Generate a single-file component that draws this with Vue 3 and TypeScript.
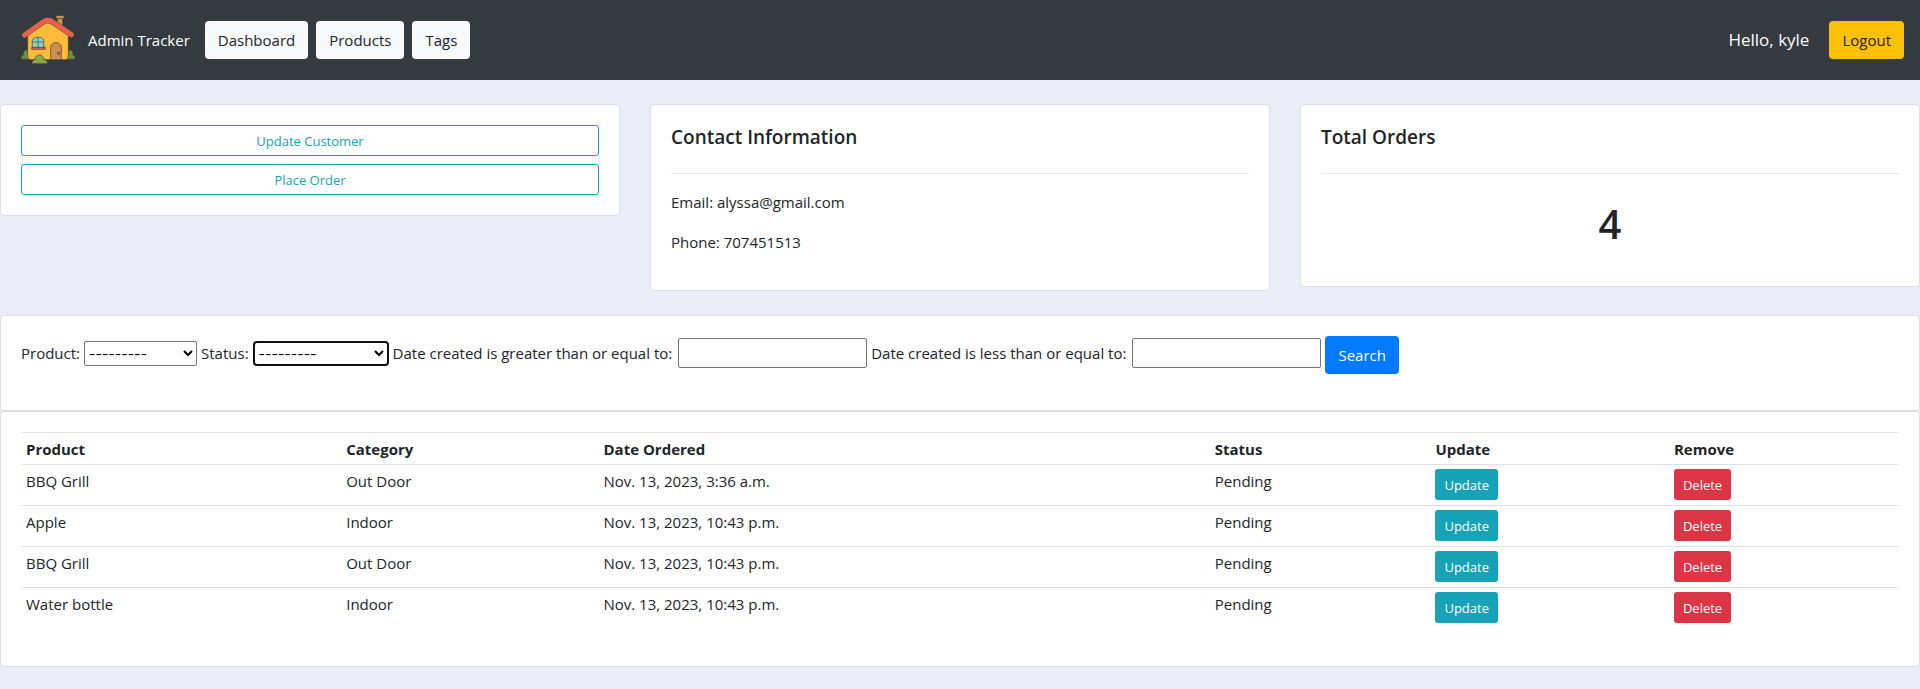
<script setup lang="ts">
import { ref } from 'vue'

interface Order {
  id: number
  product: string
  category: string
  date: string
  status: string
}

const links: string[] = ['Dashboard', 'Products', 'Tags']
const columns: string[] = ['Product', 'Category', 'Date Ordered', 'Status', 'Update', 'Remove']

const orders = ref<Order[]>([
  { id: 1, product: 'BBQ Grill', category: 'Out Door', date: 'Nov. 13, 2023, 3:36 a.m.', status: 'Pending' },
  { id: 2, product: 'Apple', category: 'Indoor', date: 'Nov. 13, 2023, 10:43 p.m.', status: 'Pending' },
  { id: 3, product: 'BBQ Grill', category: 'Out Door', date: 'Nov. 13, 2023, 10:43 p.m.', status: 'Pending' },
  { id: 4, product: 'Water bottle', category: 'Indoor', date: 'Nov. 13, 2023, 10:43 p.m.', status: 'Pending' },
])

const product = ref('')
const status = ref('')
const startDate = ref('')
const endDate = ref('')
</script>

<template>
  <div class="page">
    <nav class="navbar">
      <svg class="logo" viewBox="60 42 168 156" aria-hidden="true">
        <g stroke="#4a3a33" stroke-width="2" stroke-linejoin="round">
          <path fill="#6d9040" d="M64 178c-2-8 2-12 6-13-1-8 3-15 8-15 6 0 10 8 9 15l1 13z" />
          <path fill="#6d9040" d="M225 178c2-8-2-12-6-13 1-8-3-15-8-15-6 0-10 8-9 15l-1 13z" />
          <path fill="#c9934f" d="M172 54h16v27l-16-10z" />
          <rect fill="#d9a05a" x="168" y="47" width="24" height="8" rx="1" />
          <path fill="#fdbb3b" d="M83 100l60-36 62 38v68q0 9-9 9H92q-9 0-9-9z" />
          <path fill="#c9934f" d="M152 179v-36c0-9 7-15 16-15s16 6 16 15v36z" />
          <circle fill="#e8604c" cx="176" cy="160" r="4" />
          <path fill="#86d3ce" d="M97 143v-22c3-8 10-9 19-9s13 3 15 9v22z" />
          <path fill="none" d="M114 112v30M97 126h34" />
          <rect fill="#e8604c" x="94" y="142" width="43" height="6" rx="2" />
          <path fill="#88a946" d="M96 191c-1-8 3-12 9-12 0-8 5-14 13-14s14 6 14 14c7 0 11 4 10 12z" />
        </g>
        <g fill="none" stroke-linecap="round" stroke-linejoin="round">
          <path stroke="#4a3a33" stroke-width="17" d="M74 105l55-39q15-10 29 0l56 38" />
          <path stroke="#e8604c" stroke-width="15" d="M74 105l55-39q15-10 29 0l56 38" />
        </g>
      </svg>
      <span class="brand">Admin Tracker</span>
      <div class="links">
        <a v-for="link in links" :key="link" class="btn light" href="#">{{ link }}</a>
      </div>
      <span class="hello">Hello, kyle</span>
      <a class="btn warning" href="#">Logout</a>
    </nav>

    <main>
      <div class="summary">
        <section class="card actions">
          <a class="btn small outline" href="#">Update Customer</a>
          <a class="btn small outline" href="#">Place Order</a>
        </section>
        <section class="card">
          <h5>Contact Information</h5>
          <hr />
          <p>Email: alyssa@gmail.com</p>
          <p>Phone: 707451513</p>
        </section>
        <section class="card">
          <h5>Total Orders</h5>
          <hr />
          <h1>{{ orders.length }}</h1>
        </section>
      </div>

      <section class="card">
        <form class="filter" @submit.prevent>
          <div class="fields">
            <label for="product">Product:</label>
            <select id="product" v-model="product" class="field product">
              <option value="">---------</option>
              <option>BBQ Grill</option>
              <option>Apple</option>
              <option>Water bottle</option>
            </select>
            <label for="status">Status:</label>
            <select id="status" v-model="status" class="field status">
              <option value="">---------</option>
              <option>Pending</option>
              <option>Delivered</option>
            </select>
            <label for="start">Date created is greater than or equal to:</label>
            <input id="start" v-model="startDate" class="field date" type="text" />
            <label for="end">Date created is less than or equal to:</label>
            <input id="end" v-model="endDate" class="field date" type="text" />
          </div>
          <button class="btn primary" type="submit">Search</button>
        </form>
      </section>

      <section class="card">
        <table>
          <thead>
            <tr>
              <th v-for="column in columns" :key="column" scope="col">{{ column }}</th>
            </tr>
          </thead>
          <tbody>
            <tr v-for="order in orders" :key="order.id">
              <td>{{ order.product }}</td>
              <td>{{ order.category }}</td>
              <td>{{ order.date }}</td>
              <td>{{ order.status }}</td>
              <td><a class="btn small info" href="#">Update</a></td>
              <td><a class="btn small danger" href="#">Delete</a></td>
            </tr>
          </tbody>
        </table>
      </section>
    </main>
  </div>
</template>

<style>
body {
  margin: 0;
  background: #eaedf5;
}
</style>

<style scoped>
.page,
.page * {
  box-sizing: border-box;
}

.page {
  font: 15px/24px "Open Sans", "Noto Sans", sans-serif;
  color: #212529;
}

.navbar {
  display: flex;
  align-items: center;
  min-height: 80px;
  padding: 0 16px 0 20px;
  background: #343a40;
  color: #fff;
}

.logo {
  width: 56px;
  height: 52px;
  margin-right: 12px;
}

.brand {
  margin-right: 15px;
}

.links {
  display: flex;
  gap: 8px;
}

.hello {
  margin-left: auto;
  margin-right: 20px;
  font-size: 17px;
}

.btn {
  display: inline-flex;
  align-items: center;
  justify-content: center;
  height: 38px;
  padding: 0 12px;
  border: 1px solid transparent;
  border-radius: 4px;
  font: inherit;
  text-decoration: none;
  white-space: nowrap;
}

.small {
  height: 31px;
  padding: 0 8px;
  border-radius: 3px;
  font-size: 13px;
  vertical-align: top;
}

.light {
  background: #f8f9fa;
  color: #212529;
}

.warning {
  background: #ffc107;
  color: #212529;
}

.primary {
  background: #007bff;
  color: #fff;
}

.info {
  background: #17a2b8;
  color: #fff;
}

.danger {
  background: #dc3545;
  color: #fff;
}

.outline {
  border-color: #17a2b8;
  color: #17a2b8;
}

.summary {
  display: grid;
  grid-template-columns: repeat(3, 1fr);
  align-items: start;
  gap: 30px;
  margin: 24px 0;
}

.card {
  padding: 20px;
  border: 1px solid #dfdfdf;
  border-radius: 4px;
  background: #fff;
}

.actions {
  display: flex;
  flex-direction: column;
  gap: 8px;
}

h5 {
  margin: 0 0 24px;
  font-size: 19px;
  font-weight: 600;
  line-height: 24px;
}

hr {
  margin: 0 0 16px;
  border: 0;
  border-top: 1px solid #e5e5e5;
}

p {
  margin: 0 0 16px;
}

h1 {
  margin: 0;
  padding: 10px 0 18px;
  font-size: 40px;
  font-weight: 600;
  line-height: 48px;
  text-align: center;
}

.filter {
  display: flex;
  flex-wrap: wrap;
  align-items: flex-start;
  gap: 4px;
  margin-bottom: 16px;
}

.fields {
  display: flex;
  flex-wrap: wrap;
  align-items: center;
  gap: 4px;
  min-height: 34px;
}

.field {
  border: 1px solid #767676;
  border-radius: 2px;
  background: #fff;
  color: #000;
}

select.field {
  height: 25px;
  font: 14px Inter, sans-serif;
}

.field.product {
  width: 113px;
}

.field.status {
  width: 136px;
  border: 2px solid #101010;
  border-radius: 4px;
}

.field.date {
  width: 189px;
  height: 30px;
  margin-left: 2px;
  font: inherit;
}

table {
  width: 100%;
  margin-bottom: 18px;
  border-collapse: collapse;
  table-layout: fixed;
}

th,
td {
  padding: 4px 5px 5px;
  border-top: 1px solid #dee2e6;
  text-align: left;
  vertical-align: top;
}

th {
  padding-bottom: 3px;
  font-weight: 700;
}

th:nth-child(1) {
  width: 17.05%;
}

th:nth-child(2) {
  width: 13.7%;
}

th:nth-child(3) {
  width: 32.55%;
}

th:nth-child(4) {
  width: 11.75%;
}

th:nth-child(5) {
  width: 12.7%;
}
</style>
